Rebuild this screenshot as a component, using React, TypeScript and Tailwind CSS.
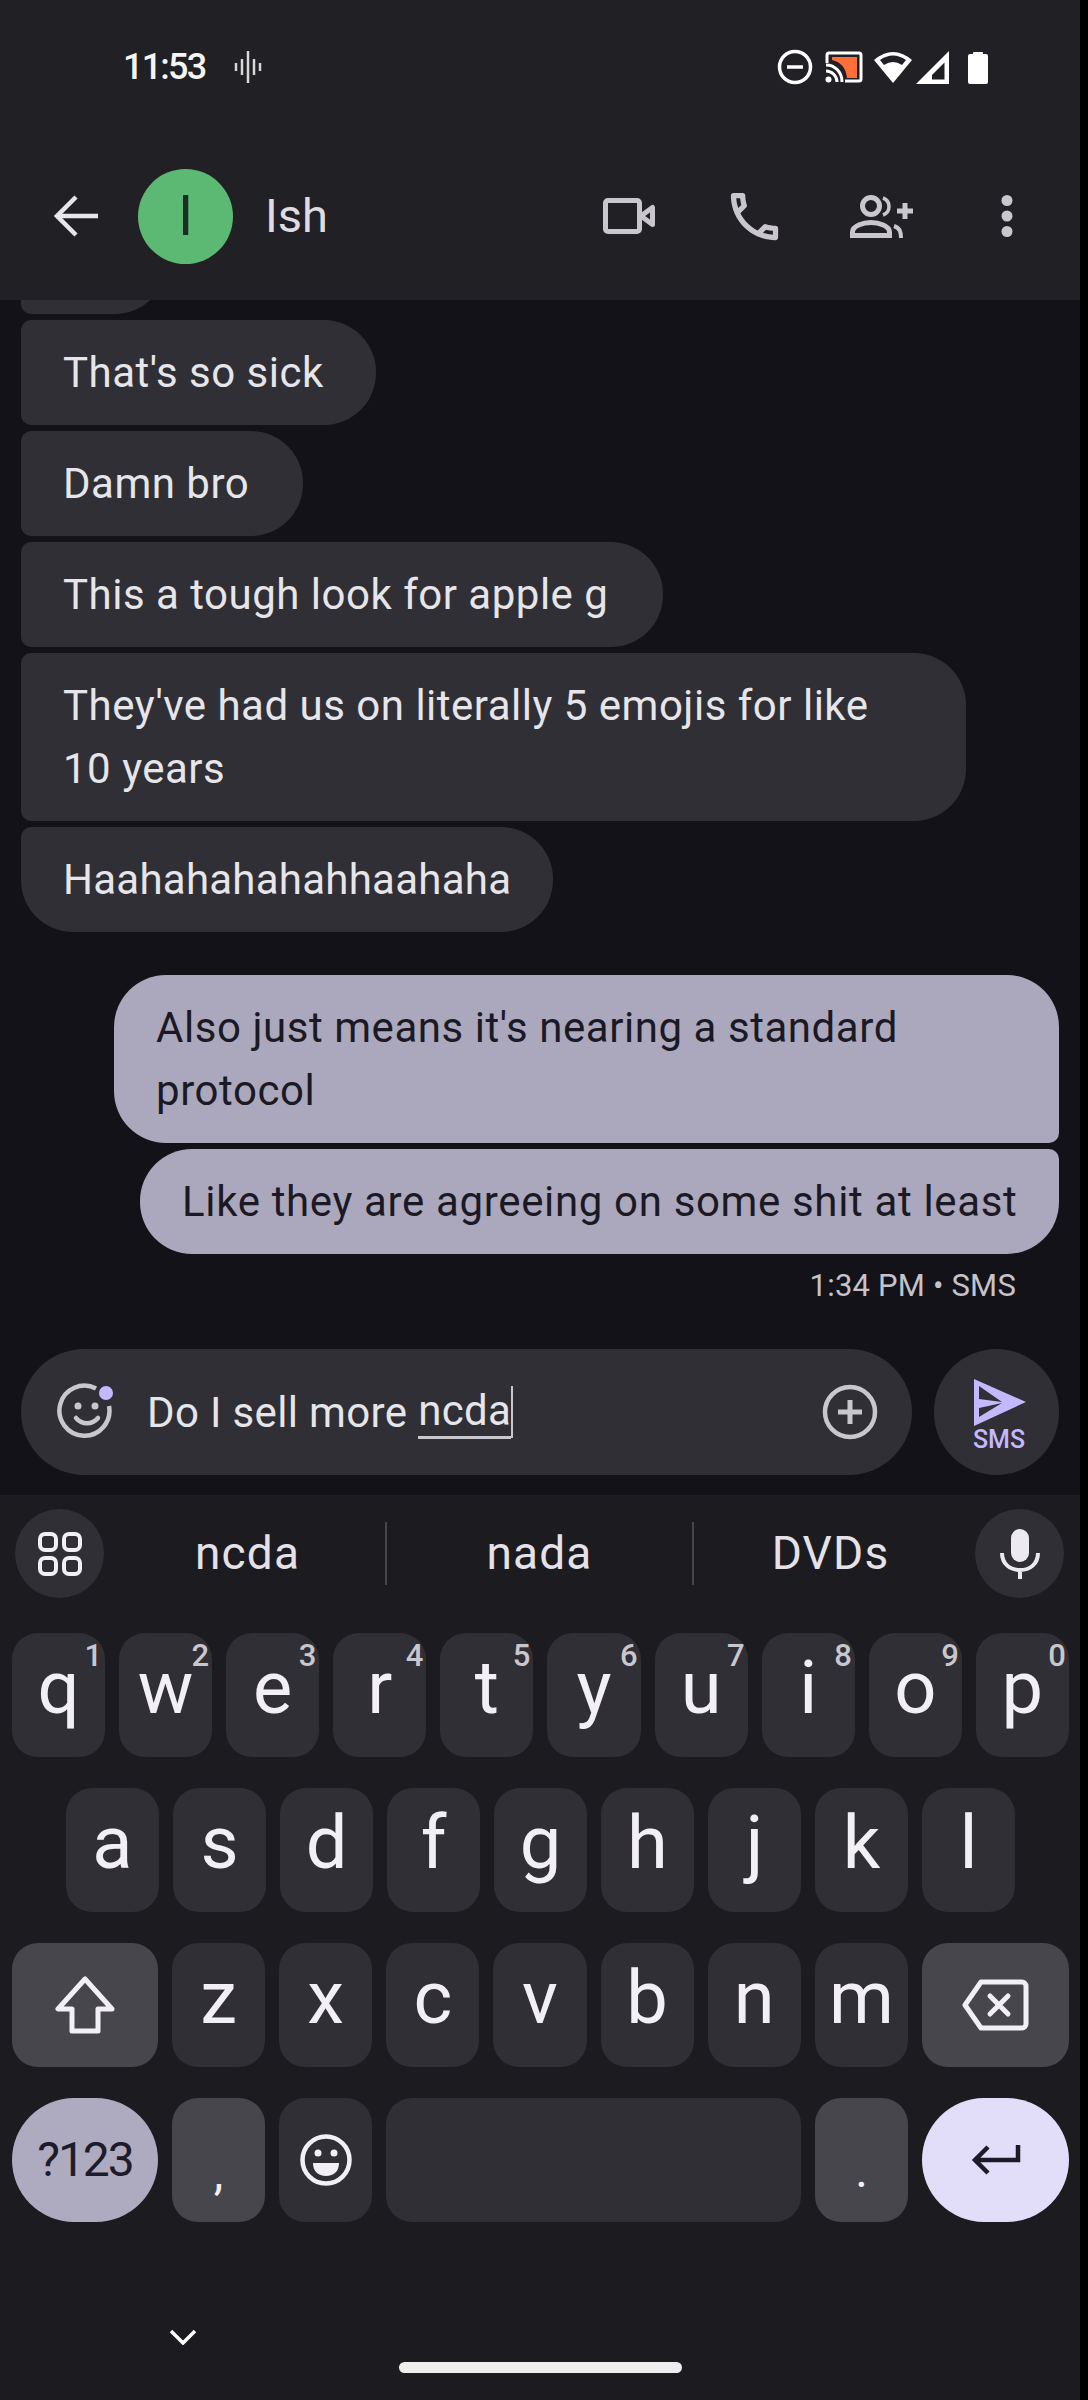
import type { ReactNode } from 'react';

const ROW_1 = [
  ['q', '1'],
  ['w', '2'],
  ['e', '3'],
  ['r', '4'],
  ['t', '5'],
  ['y', '6'],
  ['u', '7'],
  ['i', '8'],
  ['o', '9'],
  ['p', '0'],
];
const ROW_2 = ['a', 's', 'd', 'f', 'g', 'h', 'j', 'k', 'l'];
const ROW_3 = ['z', 'x', 'c', 'v', 'b', 'n', 'm'];

function Key({ label, hint }: { label: string; hint?: string }) {
  return (
    <div className="relative flex h-[124px] flex-1 items-center justify-center rounded-[26px] bg-[#2f2f35] pb-[14px] text-[74px] font-normal leading-none text-[#f2f0f5]">
      {label}
      {hint && (
        <span className="absolute top-[3px] right-[3px] text-[31px] font-medium leading-[40px] text-[#c9c7cd]">
          {hint}
        </span>
      )}
    </div>
  );
}

function FnKey({ children, className }: { children: ReactNode; className: string }) {
  return (
    <div className={`flex h-[124px] items-center justify-center bg-[#47464c] ${className}`}>
      {children}
    </div>
  );
}

function StatusIcons() {
  return (
    <div className="flex items-center">
      {/* do not disturb */}
      <svg viewBox="0 0 36 36" className="h-[36px] w-[36px]">
        <circle cx="18" cy="18" r="15.5" fill="none" stroke="#fff" strokeWidth="3.5" />
        <path d="M10 18h16" stroke="#fff" strokeWidth="3.5" />
      </svg>
      {/* cast */}
      <svg viewBox="0 0 38 32" className="ml-[12px] h-[32px] w-[38px]">
        <path d="M2 12V4a2 2 0 0 1 2-2h30a2 2 0 0 1 2 2v24a2 2 0 0 1-2 2H20" fill="none" stroke="#fff" strokeWidth="3" />
        <path d="M7 6h25v21H22C21 17 16 11 7 9z" fill="#ff7039" />
        <path d="M1 14c9 0 16 7 16 17M1 20c6 0 11 5 11 11" fill="none" stroke="#fff" strokeWidth="3" />
        <circle cx="3.5" cy="28.5" r="3" fill="#fff" />
      </svg>
      {/* wifi */}
      <svg viewBox="0 0 40 34" className="ml-[10px] h-[34px] w-[40px]">
        <path d="M20 33 1 10Q20-6 39 10Z" fill="#fff" />
        <path d="M7 10Q20 1 33 10L29 15Q20 9 11 15Z" fill="#212125" />
      </svg>
      {/* signal */}
      <svg viewBox="0 0 33 33" className="ml-[3px] h-[33px] w-[33px]">
        <path d="M0 33 33 0v33z" fill="#fff" />
        <path d="M16 28.500h12.500V11.500L16 24z" fill="#212125" />
      </svg>
      {/* battery */}
      <svg viewBox="0 0 20 34" className="ml-[19px] h-[34px] w-[20px]">
        <path d="M5 3a1 1 0 0 1 1-1h8a1 1 0 0 1 1 1v1h3a2 2 0 0 1 2 2v26a2 2 0 0 1-2 2H2a2 2 0 0 1-2-2V6a2 2 0 0 1 2-2h3z" fill="#fff" />
      </svg>
    </div>
  );
}

function Header() {
  return (
    <header className="flex h-[300px] flex-col bg-[#212125]">
      <div className="flex h-[134px] items-center justify-between pr-[92px] pl-[123px]">
        <div className="flex items-center">
          <span className="text-[36px] font-medium tracking-[-1.8px] text-[#f5f5f5]">11:53</span>
          <svg viewBox="0 0 28 34" className="ml-[29px] h-[34px] w-[28px]" stroke="#d8d8d8" strokeWidth="2.500">
            <path d="M2 13v8M8 9v16M14 1v32M20 9v16M26 13v8" />
          </svg>
        </div>
        <StatusIcons />
      </div>
      <div className="flex h-[164px] items-center pr-[67px] pl-[53px]">
        <svg viewBox="0 0 46 42" className="h-[42px] w-[46px]" fill="none" stroke="#e8e6ea" strokeWidth="4.500">
          <path d="M45 21H6M23 2 4 21l19 19" />
        </svg>
        <div className="ml-[39px] flex h-[95px] w-[95px] items-center justify-center rounded-full bg-[#5bb974] text-[56px] leading-none font-normal text-[#1a2f20]">
          I
        </div>
        <span className="ml-[32px] text-[47px] text-[#dedce1]">Ish</span>
        <div className="flex-1" />
        {/* video */}
        <svg viewBox="0 0 52 36" className="h-[36px] w-[52px]" fill="none" stroke="#c9c7cd" strokeWidth="5" strokeLinejoin="round">
          <rect x="2.500" y="2.500" width="34" height="31" rx="2.500" />
          <path d="M38 18 49.500 9.500v17z" />
        </svg>
        {/* phone */}
        <svg viewBox="0 0 24 24" className="ml-[68px] h-[63px] w-[63px]" fill="#c9c7cd">
          <path d="M6.540 5c.06.89.21 1.760.45 2.590l-1.200 1.200c-.41-1.200-.67-2.470-.76-3.790h1.510m9.860 12.020c.85.24 1.720.39 2.600.45v1.490c-1.320-.09-2.590-.35-3.800-.75l1.200-1.190M7.500 3H4c-.55 0-1 .45-1 1 0 9.390 7.610 17 17 17 .55 0 1-.45 1-1v-3.490c0-.55-.45-1-1-1-1.240 0-2.450-.2-3.570-.57-.1-.04-.21-.05-.31-.05-.26 0-.51.1-.71.29l-2.200 2.200c-2.830-1.450-5.150-3.760-6.590-6.590l2.200-2.200c.28-.28.36-.67.25-1.020C8.700 6.450 8.500 5.250 8.500 4c0-.55-.45-1-1-1z" />
        </svg>
        {/* add person */}
        <svg viewBox="0 0 63 43" className="ml-[64px] h-[43px] w-[63px]" fill="none" stroke="#c9c7cd" strokeWidth="5">
          <circle cx="21" cy="11" r="8.500" />
          <path d="M33 3C41 6 41 17 33 20" strokeWidth="3.500" />
          <path d="M2.500 40.500V37C2.500 31 13 27.500 21 27.500S39.500 31 39.500 37v3.500z" />
          <path d="M44 31c6 2 7 6 7 12" strokeWidth="4" />
          <path d="M47 16h16M55 8v16" />
        </svg>
        {/* more */}
        <svg viewBox="0 0 12 42" className="ml-[88px] h-[42px] w-[12px]" fill="#c9c7cd">
          <circle cx="6" cy="5.500" r="5.500" />
          <circle cx="6" cy="21" r="5.500" />
          <circle cx="6" cy="36.500" r="5.500" />
        </svg>
      </div>
    </header>
  );
}

function Received({ className, children }: { className: string; children?: ReactNode }) {
  return (
    <div className={`shrink-0 whitespace-nowrap rounded-l-[10px] rounded-r-[52px] bg-[#2f2f35] px-[42px] py-[21px] text-[42px] leading-[63px] tracking-[0.5px] text-[#e6e5ea] ${className}`}>
      {children}
    </div>
  );
}

function Composer() {
  return (
    <div className="mt-[37px] flex shrink-0 gap-[22px]">
      <div className="flex h-[126px] flex-1 items-center rounded-full bg-[#2f2f35] pl-[36px]">
        <svg viewBox="0 0 60 60" className="h-[60px] w-[60px] shrink-0" fill="none" stroke="#c9c7cd" strokeWidth="4.500">
          <path d="M39 6.500A25 25 0 1 0 52 24" />
          <path d="M19 36c6 7 16 7 22 0" strokeLinecap="round" />
          <circle cx="21" cy="24" r="3.500" fill="#c9c7cd" stroke="none" />
          <circle cx="38" cy="24" r="3.500" fill="#c9c7cd" stroke="none" />
          <circle cx="49" cy="11" r="7" fill="#c4b8ff" stroke="none" />
        </svg>
        <div className="ml-[30px] flex h-[52px] items-center whitespace-nowrap text-[42px] tracking-[0.35px] text-[#e6e5ea]">
          Do I sell more&nbsp;
          <span className="border-b-[3px] border-[#c9c7cd] leading-[50px]">ncda</span>
          <span className="h-[52px] w-[2px] bg-[#c9c7cd]" />
        </div>
        <div className="flex-1" />
        <svg viewBox="0 0 56 56" className="mr-[34px] h-[56px] w-[56px]" fill="none" stroke="#c9c7cd" strokeWidth="4.500">
          <circle cx="28" cy="28" r="25" />
          <path d="M16 28h24M28 16v24" strokeWidth="5" />
        </svg>
      </div>
      <div className="relative flex h-[126px] w-[125px] flex-col items-center rounded-full bg-[#2f2f35] pt-[30px]">
        <svg viewBox="0 0 52 47" className="ml-[6px] h-[47px] w-[52px]" fill="#c4b8ff">
          <path d="M0 0 52 23 0 47z" />
          <path d="M5 7 28 23 5 20zM5 29 28 24 5 38z" fill="#303036" />
        </svg>
        <span className="ml-[5px] text-[25px] leading-[28px] font-medium text-[#c4b8ff]">SMS</span>
      </div>
    </div>
  );
}

function SuggestionStrip() {
  return (
    <div className="flex h-[89px] items-center pr-[16px] pl-[15px]">
      <div className="flex h-[89px] w-[89px] items-center justify-center rounded-full bg-[#2f2f35]">
        <svg viewBox="0 0 44 44" className="h-[44px] w-[44px]" fill="none" stroke="#f2f0f5" strokeWidth="4">
          <rect x="2" y="2" width="16" height="16" rx="5" />
          <rect x="26" y="2" width="16" height="16" rx="5" />
          <rect x="2" y="26" width="16" height="16" rx="5" />
          <rect x="26" y="26" width="16" height="16" rx="5" />
        </svg>
      </div>
      <div className="flex flex-1 items-center pr-[8px] text-[46px] tracking-[1.2px] text-[#e4e2e8]">
        <span className="w-[281px] pl-[6px] text-center">ncda</span>
        <span className="h-[63px] w-[2px] bg-[#47464c]" />
        <span className="w-[305px] text-center">nada</span>
        <span className="h-[63px] w-[2px] bg-[#47464c]" />
        <span className="flex-1 text-center">DVDs</span>
      </div>
      <div className="flex h-[89px] w-[89px] items-center justify-center rounded-full bg-[#2f2f35]">
        <svg viewBox="0 0 40 50" className="h-[50px] w-[40px]" fill="none" stroke="#ece9f0" strokeWidth="4">
          <rect x="11" y="0" width="18" height="33" rx="9" fill="#ece9f0" stroke="none" />
          <path d="M2 24c0 11 8 17 18 17s18-6 18-17M20 41v9" />
        </svg>
      </div>
    </div>
  );
}

function Keyboard() {
  return (
    <div className="flex flex-1 flex-col bg-[#1b1b20] pt-[14px]">
      <SuggestionStrip />
      <div className="mt-[35px] flex flex-col gap-[31px] pr-[11px] pl-[12px]">
        <div className="flex gap-[14px]">
          {ROW_1.map(([k, n]) => (
            <Key key={k} label={k} hint={n} />
          ))}
        </div>
        <div className="flex gap-[14px] px-[54px]">
          {ROW_2.map((k) => (
            <Key key={k} label={k} />
          ))}
        </div>
        <div className="flex gap-[14px]">
          <FnKey className="w-[146px] rounded-[26px]">
            <svg viewBox="0 0 60 58" className="h-[58px] w-[60px]" fill="none" stroke="#f2f0f5" strokeWidth="5" strokeLinejoin="round">
              <path d="M30 3 3 33h14v22h26V33h14z" />
            </svg>
          </FnKey>
          {ROW_3.map((k) => (
            <Key key={k} label={k} />
          ))}
          <FnKey className="w-[147px] rounded-[26px]">
            <svg viewBox="0 0 67 52" className="h-[52px] w-[67px]" fill="none" stroke="#f2f0f5" strokeWidth="5" strokeLinecap="round" strokeLinejoin="round">
              <path d="M19 3h41a4 4 0 0 1 4 4v38a4 4 0 0 1-4 4H19L3 26z" />
              <path d="M28 17 46 35M46 17 28 35" />
            </svg>
          </FnKey>
        </div>
        <div className="flex gap-[14px]">
          <div className="flex h-[124px] w-[146px] items-center justify-center rounded-full bg-[#aeabc0] text-[48px] tracking-[-2px] text-[#1e1c2b]">
            ?123
          </div>
          <FnKey className="w-[93px] rounded-[26px] pt-[26px] text-[48px] leading-none text-[#f2f0f5]">,</FnKey>
          <div className="flex h-[124px] w-[93px] items-center justify-center rounded-[26px] bg-[#2f2f35]">
            <svg viewBox="0 0 56 56" className="h-[56px] w-[56px]">
              <circle cx="28" cy="28" r="23.500" fill="none" stroke="#f2f0f5" strokeWidth="4.500" />
              <circle cx="20" cy="21" r="3.500" fill="#f2f0f5" />
              <circle cx="36" cy="21" r="3.500" fill="#f2f0f5" />
              <path d="M15 31h26c0 8-5 13-13 13s-13-5-13-13z" fill="#f2f0f5" />
            </svg>
          </div>
          <div className="h-[124px] flex-1 rounded-[26px] bg-[#2f2f35]" />
          <FnKey className="w-[93px] rounded-[26px] pt-[22px] text-[48px] leading-none text-[#f2f0f5]">.</FnKey>
          <div className="flex h-[124px] w-[147px] items-center justify-center rounded-full bg-[#e2def9]">
            <svg viewBox="0 0 50 32" className="h-[32px] w-[50px]" fill="none" stroke="#1d1b27" strokeWidth="4.500">
              <path d="M47 1v15H5M17 3 4 16l13 13" />
            </svg>
          </div>
        </div>
      </div>
      <svg viewBox="0 0 26 16" className="mt-[107px] ml-[170px] h-[16px] w-[26px]" fill="none" stroke="#fff" strokeWidth="3.500">
        <path d="M1 2 13 14 25 2" />
      </svg>
      <div className="mt-[17px] ml-[399px] h-[11px] w-[283px] rounded-full bg-[#eeeeee]" />
    </div>
  );
}

export default function App() {
  return (
    <div className="h-[2400px] w-[1088px] bg-black font-['Roboto',sans-serif]">
      <div className="flex h-[2400px] w-[1080px] flex-col">
        <Header />
        <main className="flex h-[1195px] flex-col justify-end gap-[6px] overflow-hidden bg-[#131218] px-[21px] pb-[20px]">
          <Received className="h-[105px] w-[146px]" />
          <Received className="w-[355px]">That's so sick</Received>
          <Received className="w-[282px]">Damn bro</Received>
          <Received className="w-[642px]">This a tough look for apple g</Received>
          <Received className="w-[945px]">
            They've had us on literally 5 emojis for like
            <br />
            10 years
          </Received>
          <Received className="w-[532px] rounded-bl-[52px] tracking-[0.25px]">Haahahahahahhaahaha</Received>

          <div className="mt-[37px] w-[945px] shrink-0 self-end whitespace-nowrap rounded-l-[52px] rounded-tr-[52px] rounded-br-[10px] bg-[#aba8be] px-[42px] py-[21px] text-[42px] leading-[63px] tracking-[0.55px] text-[#1b1a24]">
            Also just means it's nearing a standard
            <br />
            protocol
          </div>
          <div className="w-[919px] shrink-0 self-end whitespace-nowrap rounded-l-[52px] rounded-tr-[10px] rounded-br-[52px] bg-[#aba8be] px-[42px] py-[21px] text-[42px] leading-[63px] tracking-[0.65px] text-[#1b1a24]">
            Like they are agreeing on some shit at least
          </div>
          <div className="mt-[6px] shrink-0 self-end pr-[43px] text-[31px] leading-[40px] tracking-[0.2px] text-[#c5c3c9]">1:34 PM • SMS</div>

          <Composer />
        </main>
        <Keyboard />
      </div>
    </div>
  );
}
